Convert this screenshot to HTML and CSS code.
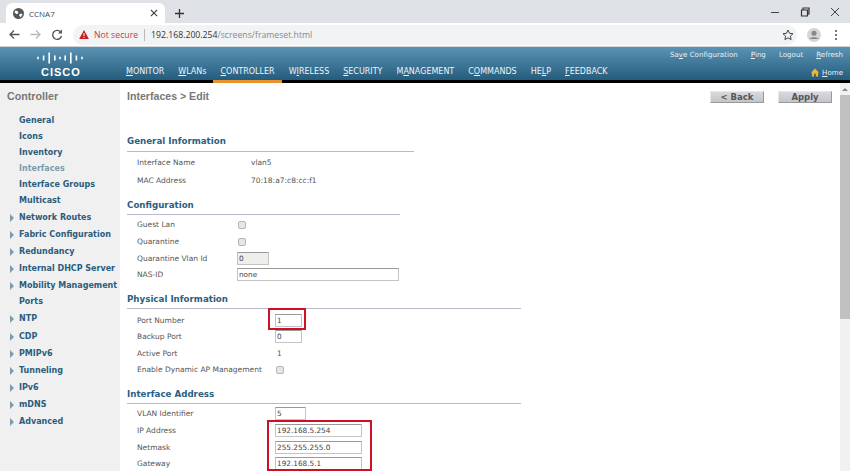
FILE: index.html
```html
<!DOCTYPE html>
<html lang="en">
<head>
	<meta charset="UTF-8">
	<title>CCNA7</title>
	<link rel="stylesheet" href="styles.css">
</head>
<body>
	<div class="tabstrip">
		<div class="tab">
			<svg class="globe" width="11" height="11" viewBox="0 0 14 14"><circle cx="7" cy="7" r="7" fill="#555"/><path d="M3 3l3 1 1 2-2 2-3-2zM8 8l3-1 1 1-2 4-2-2z" fill="#fff"/></svg>
			<span class="tab_title">CCNA7</span>
			<svg class="tab_close" width="8" height="8" viewBox="0 0 9 9"><path d="M1 1l7 7M8 1l-7 7" stroke="#444" stroke-width="1.4"/></svg>
		</div>
		<svg class="newtab" width="11" height="11" viewBox="0 0 11 11"><path d="M5.500 1v9M1 5.500h9" stroke="#333" stroke-width="1.300"/></svg>
		<div class="wincontrols">
			<svg width="10" height="10" viewBox="0 0 10 10"><path d="M1 5.500h8" stroke="#444" stroke-width="1"/></svg>
			<svg width="10" height="10" viewBox="0 0 10 10"><path d="M1.500 3h6v6h-6zM3 3V1h6v6H7.500" fill="none" stroke="#333" stroke-width="1.200"/></svg>
			<svg width="10" height="10" viewBox="0 0 10 10"><path d="M1 1l8 8M9 1l-8 8" stroke="#444" stroke-width="1"/></svg>
		</div>
	</div>
	<div class="toolbar">
		<svg width="11" height="11" viewBox="0 0 11 11"><path d="M10.500 5.500H1M5 1.500l-4 4 4 4" fill="none" stroke="#555" stroke-width="1.300"/></svg>
		<svg width="11" height="11" viewBox="0 0 11 11"><path d="M.5 5.500H10M6 1.500l4 4-4 4" fill="none" stroke="#bbb" stroke-width="1.300"/></svg>
		<svg width="12" height="12" viewBox="0 0 12 12"><path d="M10 3.500A4.500 4.500 0 1 0 10.500 7" fill="none" stroke="#555" stroke-width="1.400"/><path d="M11 .5v4H7z" fill="#555"/></svg>
		<div class="omnibox">
			<svg width="10" height="9" viewBox="0 0 13 12"><path d="M6.500 0L13 12H0z" fill="#c5221f"/><path d="M6.500 4v4M6.500 9v1.500" stroke="#fff" stroke-width="1.300"/></svg>
			<span class="notsecure">Not secure</span>
			<span class="url"><b>192.168.200.254</b>/screens/frameset.html</span>
			<svg class="star" width="12" height="12" viewBox="0 0 12 12"><path d="M6 1l1.500 3.300 3.500.4-2.600 2.400.7 3.500L6 8.800l-3.100 1.800.7-3.500L1 4.700l3.500-.4z" fill="none" stroke="#444" stroke-width="1"/></svg>
		</div>
		<svg class="avatar" width="14" height="14" viewBox="0 0 14 14"><circle cx="7" cy="7" r="7" fill="#d5d5d8"/><circle cx="7" cy="5.300" r="2.500" fill="#888"/><path d="M2.500 11c1-2.500 8-2.500 9 0z" fill="#888"/></svg>
		<svg class="dots" width="4" height="12" viewBox="0 0 4 12"><circle cx="2" cy="2" r="1.100" fill="#555"/><circle cx="2" cy="6" r="1.100" fill="#555"/><circle cx="2" cy="10" r="1.100" fill="#555"/></svg>
	</div>

	<div class="header">
		<div class="logo">
			<svg width="46" height="12" viewBox="0 0 46 12"><path d="M1 4.800v2.400M6.600 3.500v5M12.200 .5v11M17.800 3.500v5M23 4.800v2.400M28.200 3.500v5M33.800 .5v11M39.400 3.500v5M45 4.800v2.400" stroke="#fff" stroke-width="1.600"/></svg>
			<span class="logo_text">CISCO</span>
		</div>
		<ul class="nav">
			<li><u>M</u>ONITOR</li>
			<li><u>W</u>LANs</li>
			<li class="nav_on"><u>C</u>ONTROLLER</li>
			<li>W<u>I</u>RELESS</li>
			<li><u>S</u>ECURITY</li>
			<li>M<u>A</u>NAGEMENT</li>
			<li>C<u>O</u>MMANDS</li>
			<li>HE<u>L</u>P</li>
			<li><u>F</u>EEDBACK</li>
		</ul>
		<div class="header_right">
			<div class="util">
				<span>Sa<u>v</u>e Configuration</span>
				<span><u>P</u>ing</span>
				<span>Logout</span>
				<span><u>R</u>efresh</span>
			</div>
			<div class="home">
				<svg width="8" height="9" viewBox="0 0 9 9"><path d="M4.500 0L9 4.500H8V9H5.500V6h-2v3H1V4.500H0z" fill="#f5b335"/></svg>
				<span><u>H</u>ome</span>
			</div>
		</div>
	</div>

	<div class="page">
		<div class="sidebar">
			<h2 class="side_title">Controller</h2>
			<ul class="side_menu">
				<li>General</li>
				<li>Icons</li>
				<li>Inventory</li>
				<li class="side_on">Interfaces</li>
				<li>Interface Groups</li>
				<li>Multicast</li>
				<li class="more">Network Routes</li>
				<li class="more">Fabric Configuration</li>
				<li class="more">Redundancy</li>
				<li class="more">Internal DHCP Server</li>
				<li class="more">Mobility Management</li>
				<li>Ports</li>
				<li class="more">NTP</li>
				<li class="more">CDP</li>
				<li class="more">PMIPv6</li>
				<li class="more">Tunneling</li>
				<li class="more">IPv6</li>
				<li class="more">mDNS</li>
				<li class="more">Advanced</li>
			</ul>
		</div>

		<div class="content">
			<div class="titlebar">
				<h1 class="page_title">Interfaces &gt; Edit</h1>
				<div class="buttons">
					<button class="btn">&lt; Back</button>
					<button class="btn">Apply</button>
				</div>
			</div>

			<h3 class="sec sec_general">General Information</h3>
			<div class="rows rows_general">
				<span>Interface Name</span><span>vlan5</span>
				<span>MAC Address</span><span>70:18:a7:c8:cc:f1</span>
			</div>

			<h3 class="sec sec_config">Configuration</h3>
			<div class="rows rows_config">
				<span>Guest Lan</span><span><i class="check"></i></span>
				<span>Quarantine</span><span><i class="check"></i></span>
				<span>Quarantine Vlan Id</span><span><input class="field f_small off" value="0" disabled></span>
				<span>NAS-ID</span><span><input class="field f_nas" value="none"></span>
			</div>

			<h3 class="sec sec_phys">Physical Information</h3>
			<div class="rows rows_phys">
				<span>Port Number</span><span><input class="field f_port" value="1"></span>
				<span>Backup Port</span><span><input class="field f_port" value="0"></span>
				<span>Active Port</span><span class="plain">1</span>
				<span>Enable Dynamic AP Management</span><span><i class="check"></i></span>
			</div>

			<h3 class="sec sec_addr">Interface Address</h3>
			<div class="rows rows_addr">
				<span>VLAN Identifier</span><span><input class="field f_vlan" value="5"></span>
				<span>IP Address</span><span><input class="field f_ip" value="192.168.5.254"></span>
				<span>Netmask</span><span><input class="field f_ip" value="255.255.255.0"></span>
				<span>Gateway</span><span><input class="field f_ip" value="192.168.5.1"></span>
			</div>

			<div class="redbox box_port"></div>
			<div class="redbox box_addr"></div>
		</div>

		<div class="scrollbar"><div class="thumb"></div></div>
	</div>
</body>
</html>
```

FILE: styles.css
```css
*{
	box-sizing:border-box;
	margin:0;
	padding:0;
}

ul{
	list-style-type:none;
}

html,body{
	width:850px;
	height:471px;
	overflow:hidden;
}

body{
	background-color:#fff;
	font-family:"DejaVu Sans",Verdana,sans-serif;
	font-size:9px;
	color:#555;
}

/* browser chrome */
.tabstrip{
	height:23px;
	background-color:#dee1e6;
	display:flex;
	align-items:center;
	padding:3px 0 0 6px;
}

.tab{
	width:159px;
	height:20px;
	background-color:#fff;
	border-radius:6px 6px 0 0;
	display:flex;
	align-items:center;
	padding:0 7px 0 7px;
	font-family:"Open Sans",sans-serif;
	font-size:8px;
	color:#444;
}

.globe{
	margin-right:5px;
}

.tab_title{
	flex:1;
}

.newtab{
	margin-left:9px;
}

.wincontrols{
	margin-left:auto;
	display:flex;
	gap:20px;
	padding-right:10px;
	margin-top:-3px;
}

.toolbar{
	height:24px;
	background-color:#fff;
	border-bottom:1px solid #d0d3d8;
	display:flex;
	align-items:center;
	padding:0 12px 0 9px;
	gap:10px;
}

.omnibox{
	width:724px;
	height:20px;
	background-color:#f1f3f4;
	border-radius:10px;
	display:flex;
	align-items:center;
	padding:0 3px 0 6px;
	font-family:"Open Sans",sans-serif;
	font-size:8.700px;
}

.notsecure{
	color:#c5413c;
	margin-left:5px;
	padding-right:6px;
	border-right:1px solid #bbb;
}

.url{
	margin-left:6px;
	color:#888;
}

.url b{
	font-weight:400;
	color:#333;
}

.star{
	margin-left:auto;
}

.dots{
	margin-left:3px;
}

/* wlc header */
.header{
	height:36px;
	background:linear-gradient(#5b93b4,#235c7c);
	border-bottom:3px solid #000;
	display:flex;
	color:#fff;
}

.logo{
	width:126px;
	padding:5px 0 0 37px;
	display:flex;
	flex-direction:column;
	line-height:1;
}

.logo_text{
	font-family:"Liberation Sans",sans-serif;
	font-weight:700;
	font-size:11px;
	letter-spacing:1px;
	margin:3px 0 0 4px;
}

.nav{
	display:flex;
	gap:14px;
	align-items:flex-end;
	height:33px;
	font-size:8px;
	padding-bottom:1px;
}

.nav li{
	height:14px;
	line-height:14px;
	position:relative;
	color:#eef4f7;
}

.nav_on:after{
	content:"";
	position:absolute;
	left:-7px;
	right:-7px;
	bottom:-4px;
	height:3px;
	background-color:#e8912d;
}

.header_right{
	margin-left:auto;
	padding:2px 7px 0 0;
	font-size:7.100px;
	color:#e8f0f4;
}

.util{
	display:flex;
	justify-content:flex-end;
	gap:13px;
	height:12px;
	line-height:12px;
	white-space:nowrap;
}

.home{
	display:flex;
	justify-content:flex-end;
	align-items:center;
	gap:3px;
	height:12px;
	margin-top:5px;
}

/* page body */
.page{
	height:388px;
	display:flex;
}

.sidebar{
	width:120px;
	background-color:#f0f0f0;
	padding-top:7px;
}

.side_title{
	font-family:"Liberation Sans",sans-serif;
	font-size:10.700px;
	font-weight:700;
	color:#777;
	padding-left:7px;
	line-height:12px;
}

.side_menu{
	margin-top:11px;
	font-size:8px;
	font-weight:700;
	color:#2b5d7d;
}

.side_menu li{
	height:16px;
	line-height:16px;
	padding-left:19px;
	white-space:nowrap;
	position:relative;
}

.side_menu .more{
	height:17.100px;
	line-height:17.100px;
}

.more:before{
	content:"";
	position:absolute;
	left:10px;
	top:5px;
	border-left:4px solid #7d9cab;
	border-top:4px solid transparent;
	border-bottom:4px solid transparent;
}

.side_menu .side_on{
	color:#7a9cac;
}

.content{
	flex:1;
	padding:6px 0 0 7px;
	position:relative;
}

.titlebar{
	display:flex;
	height:39px;
}

.page_title{
	font-family:"Liberation Sans",sans-serif;
	font-size:10.600px;
	font-weight:700;
	color:#777;
	line-height:14px;
}

.buttons{
	margin-left:auto;
	display:flex;
	gap:14px;
	padding:2px 8px 0 0;
}

.btn{
	width:54px;
	height:12px;
	background:linear-gradient(#d8d8de,#c4c4cc);
	border:1px solid;
	border-color:#e8e8e8 #999 #999 #e8e8e8;
	font-family:"DejaVu Sans",sans-serif;
	font-size:8.500px;
	font-weight:700;
	color:#555;
	line-height:10px;
}

.sec{
	font-size:8.700px;
	font-weight:700;
	color:#2b6080;
	height:15px;
	line-height:11px;
	border-bottom:1px solid #b8b8c8;
}

.sec_general{
	width:287px;
	height:16px;
	margin-top:8px;
}

.sec_config{
	width:273px;
	margin-top:11px;
}

.sec_phys{
	width:394px;
	margin-top:11px;
}

.sec_addr{
	width:394px;
	margin-top:11px;
}

.rows{
	display:grid;
	padding-left:10px;
	grid-auto-rows:16.600px;
	align-items:center;
	font-size:7.500px;
}

.rows span{
	display:flex;
	align-items:center;
	white-space:nowrap;
}

.rows_general{
	grid-template-columns:114px 1fr;
	grid-auto-rows:18px;
	padding-top:1px;
}

.rows_config{
	grid-template-columns:100px 1fr;
	padding-top:1.700px;
}

.rows_phys{
	grid-template-columns:138px 1fr;
	padding-top:2.700px;
}

.rows_addr{
	grid-template-columns:138px 1fr;
	padding-top:1.400px;
}

.rows .plain{
	padding-left:2px;
}

.check{
	display:block;
	width:8px;
	height:8px;
	margin-left:1px;
	background-color:#e6e6e6;
	border:1px solid #b5b5b5;
	border-radius:2px;
}

.field{
	height:13px;
	border:1px solid #c4c4c4;
	border-top-color:#999;
	background-color:#fff;
	font-family:"DejaVu Sans",sans-serif;
	font-size:7.300px;
	color:#444;
	padding:0 1px;
}

.off{
	background-color:#eeeeea;
}

.f_small{
	width:32px;
}

.f_nas{
	width:162px;
}

.f_port{
	width:27px;
}

.f_vlan{
	width:31px;
}

.f_ip{
	width:87px;
}

/* red markup drawn over the form */
.redbox{
	position:absolute;
	border:2px solid #cc1122;
}

.box_port{
	left:148px;
	top:225px;
	width:38px;
	height:22px;
}

.box_addr{
	left:147px;
	top:337px;
	width:105px;
	height:51px;
}

.scrollbar{
	width:10px;
	background-color:#f1f1f1;
}

.scrollbar:before{
	content:"";
	display:block;
	width:0;
	margin:5px auto 4px;
	border-left:3px solid transparent;
	border-right:3px solid transparent;
	border-bottom:3px solid #888;
}

.thumb{
	height:224px;
	background-color:#c1c1c1;
}
```
